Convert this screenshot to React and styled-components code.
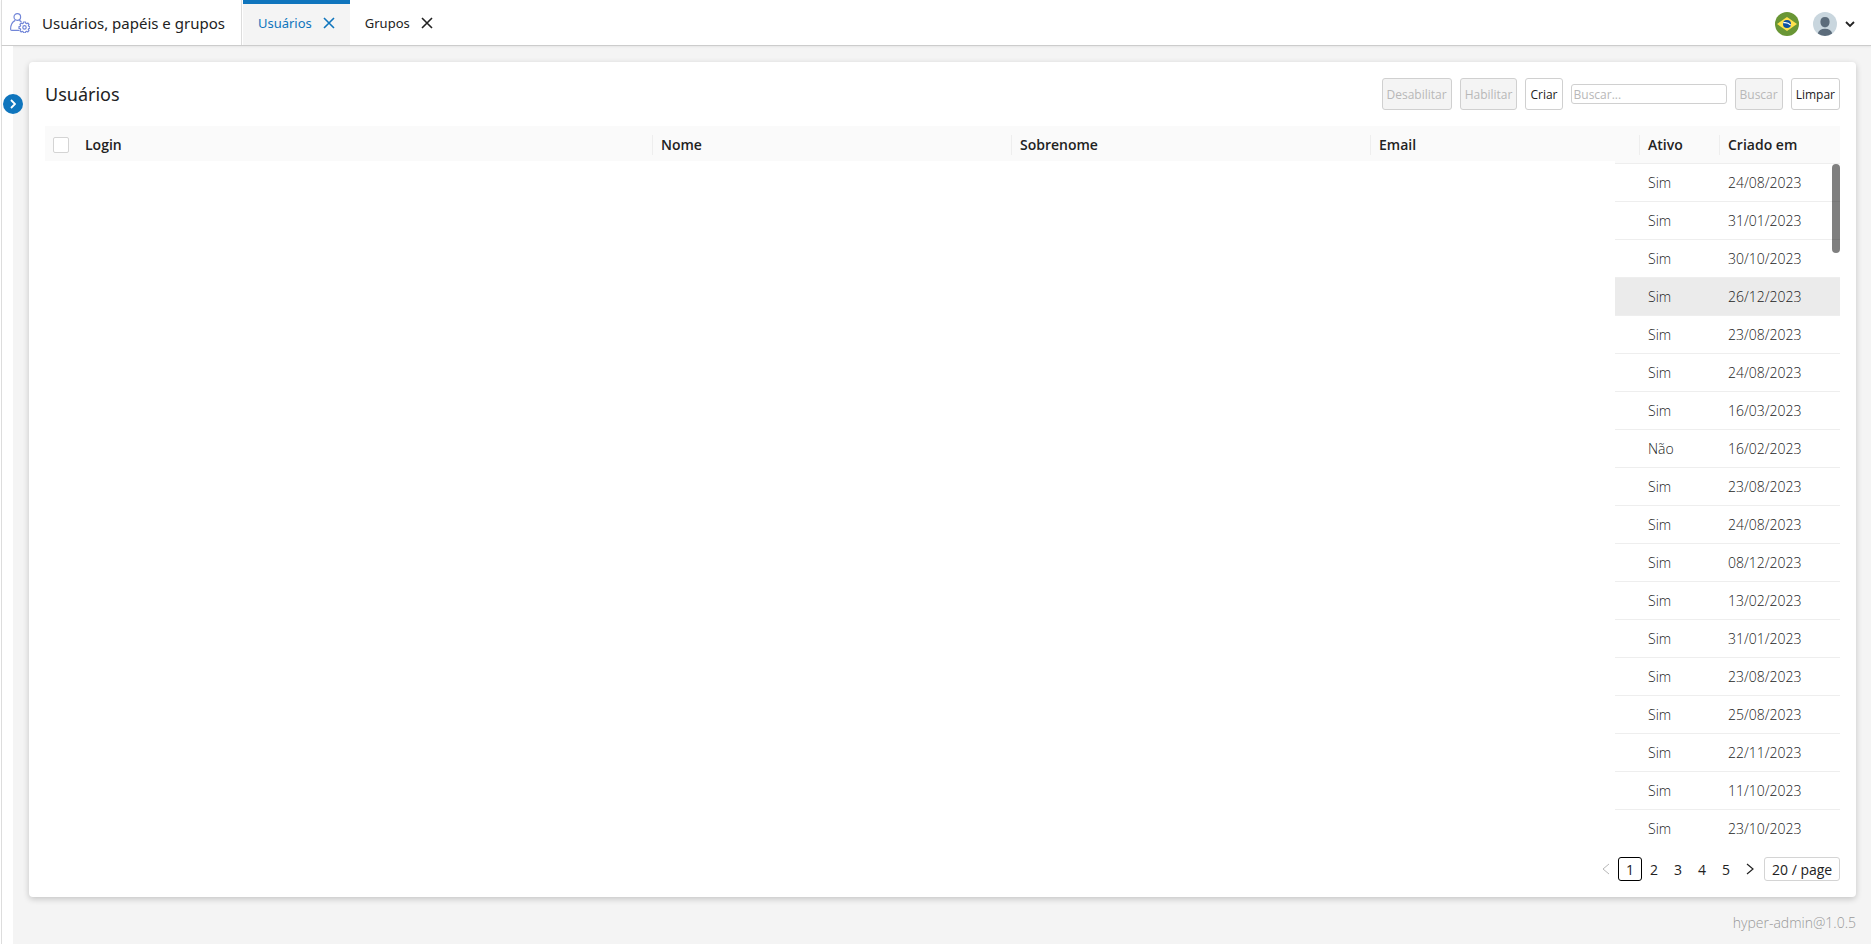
import React, { useState } from "react";
import styled, { createGlobalStyle } from "styled-components";

const users = [
  { active: "Sim", createdAt: "24/08/2023" },
  { active: "Sim", createdAt: "31/01/2023" },
  { active: "Sim", createdAt: "30/10/2023" },
  { active: "Sim", createdAt: "26/12/2023", highlighted: true },
  { active: "Sim", createdAt: "23/08/2023" },
  { active: "Sim", createdAt: "24/08/2023" },
  { active: "Sim", createdAt: "16/03/2023" },
  { active: "Não", createdAt: "16/02/2023" },
  { active: "Sim", createdAt: "23/08/2023" },
  { active: "Sim", createdAt: "24/08/2023" },
  { active: "Sim", createdAt: "08/12/2023" },
  { active: "Sim", createdAt: "13/02/2023" },
  { active: "Sim", createdAt: "31/01/2023" },
  { active: "Sim", createdAt: "23/08/2023" },
  { active: "Sim", createdAt: "25/08/2023" },
  { active: "Sim", createdAt: "22/11/2023" },
  { active: "Sim", createdAt: "11/10/2023" },
  { active: "Sim", createdAt: "23/10/2023" },
];

const UserGearIcon = () => (
  <svg width="20" height="20" viewBox="0 0 20 20" fill="none" stroke="#7286d8" strokeWidth="1.2" strokeLinecap="round" strokeLinejoin="round">
    <circle cx="7.3" cy="4" r="3.3" />
    <path d="M8.600 17.400H1.800c-.8 0-1.200-.5-1.200-1.200 0-4 1.400-7.100 4.300-8.600M9.700 7.600c.6.3 1 .6 1.400 1" />
    <path d="M13.500 9h2l.3 1.300.9.400 1.100-.7 1.300 1.300-.7 1.100.4.900 1.100.3v1.800l-1.200.3-.4.900.7 1.100-1.300 1.300-1.100-.7-.9.400-.3 1.200h-1.900l-.3-1.200-.9-.4-1.100.7-1.300-1.300.7-1.100-.4-.9-1.200-.3v-1.800l1.200-.3.400-.9-.7-1.100 1.300-1.300 1.100.7.9-.4z" />
    <circle cx="14.500" cy="14.400" r="1.700" />
  </svg>
);

const CloseIcon = () => (
  <svg width="12" height="12" viewBox="0 0 12 12" fill="none" stroke="currentColor" strokeWidth="1.6">
    <path d="M1 1l10 10M11 1L1 11" />
  </svg>
);

const BrazilFlag = () => (
  <svg width="24" height="24" viewBox="0 0 24 24">
    <circle cx="12" cy="12" r="12" fill="#699635" />
    <path d="M2 12l10-7 10 7-10 7z" fill="#ffe14d" />
    <circle cx="12" cy="12" r="4" fill="#0c4fa0" />
    <path d="M8.3 10.7c2.8-.5 5.4.3 7.4 2.4" fill="none" stroke="#fff" strokeWidth="1.3" />
  </svg>
);

const AvatarIcon = () => (
  <svg width="24" height="24" viewBox="0 0 24 24">
    <circle cx="12" cy="12" r="12" fill="#c9d6de" />
    <path d="M12 5c3 0 4.600 1.900 4.600 4.700 0 3.300-1.900 5.500-4.600 5.500s-4.600-2.200-4.600-5.500C7.400 6.900 9 5 12 5z" fill="#5c6c7b" />
    <path d="M4.800 21.500c.7-3 3.300-4.700 7.200-4.700s6.500 1.700 7.200 4.700A12 12 0 0 1 12 24a12 12 0 0 1-7.200-2.500z" fill="#5c6c7b" />
  </svg>
);

const Chevron = ({ d, width, height, weight }) => (
  <svg width={width} height={height} viewBox={`0 0 ${width} ${height}`} fill="none" stroke="currentColor" strokeWidth={weight}>
    <path d={d} />
  </svg>
);

const App = () => {
  const [search, setSearch] = useState("");
  const [page, setPage] = useState(1);

  return (
    <Page>
      <GlobalStyle />
      <TopBar>
        <Module>
          <UserGearIcon />
          <span>Usuários, papéis e grupos</span>
        </Module>
        <Tabs>
          <Tab $active>
            <TabLink href="#usuarios">Usuários</TabLink>
            <IconButton aria-label="Fechar Usuários"><CloseIcon /></IconButton>
          </Tab>
          <Tab>
            <TabLink href="#grupos">Grupos</TabLink>
            <IconButton aria-label="Fechar Grupos"><CloseIcon /></IconButton>
          </Tab>
        </Tabs>
        <Account>
          <IconButton aria-label="Idioma"><BrazilFlag /></IconButton>
          <AccountButton aria-label="Conta">
            <AvatarIcon />
            <Chevron width={10} height={8} weight={1.8} d="M1 2l4 4 4-4" />
          </AccountButton>
        </Account>
      </TopBar>

      <Body>
        <Rail>
          <RailToggle aria-label="Abrir menu">
            <Chevron width={6} height={10} weight={1.8} d="M1 1l4 4-4 4" />
          </RailToggle>
        </Rail>

        <Content>
          <Card>
            <CardHeader>
              <h1>Usuários</h1>
              <Actions>
                <Button disabled>Desabilitar</Button>
                <Button disabled>Habilitar</Button>
                <Button>Criar</Button>
                <SearchInput
                  aria-label="Buscar"
                  placeholder="Buscar..."
                  value={search}
                  onChange={(e) => setSearch(e.target.value)}
                />
                <Button disabled>Buscar</Button>
                <Button onClick={() => setSearch("")}>Limpar</Button>
              </Actions>
            </CardHeader>

            <TableArea>
              <Table>
                <colgroup>
                  <Col $width="32px" />
                  <Col />
                  <Col $width="20%" />
                  <Col $width="20%" />
                  <Col $width="244px" />
                  <Col $width="25px" />
                  <Col $width="80px" />
                  <Col $width="120px" />
                </colgroup>
                <thead>
                  <tr>
                    <HeadCell $faded>
                      <Checkbox type="checkbox" aria-label="Selecionar todos" />
                    </HeadCell>
                    <HeadCell $faded $divider><span>Login</span></HeadCell>
                    <HeadCell $faded $divider><span>Nome</span></HeadCell>
                    <HeadCell $faded $divider><span>Sobrenome</span></HeadCell>
                    <HeadCell $faded><span>Email</span></HeadCell>
                    <HeadCell $divider><span /></HeadCell>
                    <HeadCell $divider><span>Ativo</span></HeadCell>
                    <HeadCell><span>Criado em</span></HeadCell>
                  </tr>
                </thead>
                <tbody>
                  {users.map((user, idx) => (
                    <Row key={idx} $highlighted={user.highlighted}>
                      <EmptyCell colSpan={5} />
                      <Cell />
                      <Cell>{user.active}</Cell>
                      <Cell>{user.createdAt}</Cell>
                    </Row>
                  ))}
                </tbody>
              </Table>
              <ScrollThumb />
            </TableArea>

            <Pagination aria-label="Paginação">
              <PageButton disabled aria-label="Anterior">
                <Chevron width={8} height={12} weight={1} d="M7 1L1 6l6 5" />
              </PageButton>
              {[1, 2, 3, 4, 5].map((n) => (
                <PageButton key={n} $current={n === page} onClick={() => setPage(n)}>
                  {n}
                </PageButton>
              ))}
              <PageButton aria-label="Próxima">
                <Chevron width={8} height={12} weight={1.2} d="M1 1l6 5-6 5" />
              </PageButton>
              <PageSize aria-label="Itens por página" defaultValue="20">
                <option value="20">20 / page</option>
              </PageSize>
            </Pagination>
          </Card>
          <Footer>hyper-admin@1.0.5</Footer>
        </Content>
      </Body>
    </Page>
  );
};

export default App;

const GlobalStyle = createGlobalStyle`
  * {
    box-sizing: border-box;
  }

  body {
    margin: 0;
    background: #f4f4f4;
    color: #222;
    font-family: "Open Sans", "Noto Sans", sans-serif;
    font-size: 14px;
  }

  button, input, select {
    font-family: inherit;
    color: inherit;
  }
`;

const Page = styled.div`
  display: flex;
  flex-direction: column;
  min-height: 100vh;
  border-left: 1px solid #fff;
`;

const TopBar = styled.header`
  display: flex;
  height: 46px;
  background: #fff;
  border-left: 1px solid #ddd;
  border-bottom: 1px solid #ccc;
  box-shadow: 0 1px 2px rgba(0, 0, 0, 0.06);
  font-family: "Noto Sans", sans-serif;
`;

const Module = styled.div`
  display: flex;
  align-items: center;
  gap: 12px;
  padding: 0 16px 0 8px;
  border-right: 1px solid #ddd;
  font-size: 15px;
`;

const Tabs = styled.nav`
  display: flex;
  flex: 1;
  padding-left: 1px;
`;

const Tab = styled.div`
  display: flex;
  align-items: center;
  gap: 11px;
  padding: 0 15px 4px;
  border-top: 4px solid ${(p) => (p.$active ? "#0f75bd" : "transparent")};
  background: ${(p) => (p.$active ? "#f4f4f4" : "transparent")};
  color: ${(p) => (p.$active ? "#0f75bd" : "#222")};
`;

const TabLink = styled.a`
  color: inherit;
  font-size: 13px;
  text-decoration: none;
`;

const IconButton = styled.button`
  display: flex;
  padding: 0;
  border: none;
  background: none;
  cursor: pointer;
`;

const Account = styled.div`
  display: flex;
  align-items: center;
  gap: 14px;
  padding: 2px 16px 0 0;
`;

const AccountButton = styled(IconButton)`
  align-items: center;
  gap: 8px;
`;

const Body = styled.div`
  display: flex;
  flex: 1;
`;

const Rail = styled.aside`
  width: 12px;
  padding-top: 48px;
  background: #fff;
  border-left: 1px solid #ddd;
`;

const RailToggle = styled.button`
  position: relative;
  z-index: 1;
  display: flex;
  align-items: center;
  justify-content: center;
  width: 20px;
  height: 20px;
  margin-left: 1px;
  padding: 0;
  border: none;
  border-radius: 50%;
  background: #0f75bd;
  color: #fff;
  cursor: pointer;
`;

const Content = styled.main`
  display: flex;
  flex: 1;
  flex-direction: column;
  min-width: 0;
  padding: 16px 15px 0 16px;
`;

const Card = styled.section`
  display: flex;
  flex: 1;
  flex-direction: column;
  padding: 16px;
  background: #fff;
  border-radius: 4px;
  box-shadow: 0 2px 6px rgba(0, 0, 0, 0.2);
`;

const CardHeader = styled.div`
  display: flex;
  align-items: center;
  justify-content: space-between;
  margin-bottom: 16px;

  h1 {
    margin: 0;
    font-family: "Noto Sans", sans-serif;
    font-size: 18px;
    font-weight: 400;
  }
`;

const Actions = styled.div`
  display: flex;
  align-items: center;
  gap: 8px;
`;

const Button = styled.button`
  height: 32px;
  padding: 0 4px;
  border: 1px solid #d0d0d0;
  border-radius: 3px;
  background: #fff;
  font-size: 12px;
  cursor: pointer;

  &:disabled {
    background: #f4f4f4;
    color: #b8b8b8;
    cursor: default;
  }
`;

const SearchInput = styled.input`
  width: 156px;
  height: 20px;
  padding: 0 2px;
  border: 1px solid #d0d0d0;
  border-radius: 3px;
  font-size: 12px;

  &::placeholder {
    color: #b8b8b8;
  }
`;

const TableArea = styled.div`
  position: relative;
  flex: 1;
`;

const Table = styled.table`
  width: 100%;
  table-layout: fixed;
  border-spacing: 0;
`;

const Col = styled.col`
  width: ${(p) => p.$width || "auto"};
`;

const HeadCell = styled.th`
  height: 38px;
  padding: ${(p) => (p.$faded ? "2px 0 0" : "0")};
  background: #fafafa;
  border-bottom: ${(p) => (p.$faded ? "3px solid #fff" : "1px solid #eee")};
  font-weight: 600;
  text-align: left;

  span {
    display: block;
    height: 20px;
    padding-left: 8px;
    border-right: 1px solid ${(p) => (p.$divider ? "#eee" : "transparent")};
    line-height: 20px;
  }
`;

const Checkbox = styled.input`
  display: block;
  width: 16px;
  height: 16px;
  margin: 0 8px;
  appearance: none;
  border: 1px solid #d4d4d4;
  border-radius: 2px;
  background: #fff;
`;

const Cell = styled.td`
  height: 38px;
  padding: 0 8px;
  border-bottom: 1px solid #eee;
  font-weight: 300;
`;

const EmptyCell = styled.td`
  padding: 0;
  background: #fff;
`;

const Row = styled.tr`
  ${Cell} {
    background: ${(p) => (p.$highlighted ? "#ebebeb" : "#fff")};
  }

  &:last-child ${Cell} {
    border-bottom-color: transparent;
  }
`;

const ScrollThumb = styled.div`
  position: absolute;
  top: 38px;
  right: 0;
  width: 8px;
  height: 89px;
  border-radius: 4px;
  background: rgba(0, 0, 0, 0.5);
`;

const Pagination = styled.nav`
  display: flex;
  align-items: center;
  justify-content: flex-end;
  margin-top: 9px;
`;

const PageButton = styled.button`
  display: flex;
  align-items: center;
  justify-content: center;
  width: 24px;
  height: 24px;
  padding: 0;
  border: 1px solid ${(p) => (p.$current ? "#000" : "transparent")};
  border-radius: 3px;
  background: none;
  font-size: 14px;
  cursor: pointer;

  &:disabled {
    color: #b8b8b8;
  }
`;

const PageSize = styled.select`
  height: 24px;
  margin-left: 2px;
  padding: 0 6px 0 7px;
  appearance: none;
  border: 1px solid #d4d4d4;
  border-radius: 3px;
  background: #fff;
  font-size: 14px;
`;

const Footer = styled.footer`
  padding: 16px 0 11px;
  color: #999;
  font-weight: 300;
  line-height: 20px;
  text-align: right;
`;
